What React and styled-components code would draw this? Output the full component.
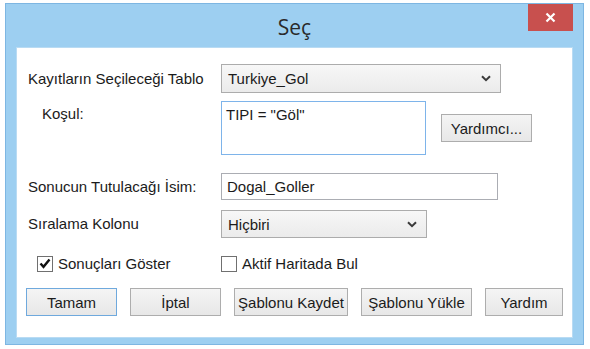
import React from "react";
import styled, { createGlobalStyle } from "styled-components";

const Global = createGlobalStyle`
  html, body { margin: 0; padding: 0; background: #ffffff; }
  body { font-family: "Liberation Sans", Arial, sans-serif; color: #1b1b1b; }
  * { box-sizing: border-box; }
`;

const Window = styled.div`
  margin: 3px 0 0 5px;
  width: 579px;
  height: 342px;
  background: #9dcff1;
  border: 1px solid #7db6e2;
  display: flex;
  flex-direction: column;
`;

const TitleBar = styled.div`
  height: 43px;
  display: grid;
  grid-template-columns: 1fr auto 1fr;
  padding: 0 10px;
`;

const Title = styled.div`
  grid-column: 2;
  font-family: "Open Sans", "Liberation Sans", sans-serif;
  font-size: 21px;
  color: #2a2a2a;
  padding-top: 9px;
  line-height: 28px;
`;

const CloseButton = styled.div`
  grid-column: 3;
  justify-self: end;
  width: 45px;
  height: 27px;
  background: #c8504e;
  display: flex;
  align-items: center;
  justify-content: center;
`;

const Content = styled.div`
  flex: 1;
  margin: 0 10px 6px;
  background: #ffffff;
  border: 1px solid #b9dbf3;
  padding: 16px 0 0 0;
  display: flex;
  flex-direction: column;
`;

const Row = styled.div`
  display: grid;
  grid-template-columns: 204px auto auto;
  justify-content: start;
  align-items: center;
  margin-top: ${(p) => p.$mt || 0}px;
`;

const Label = styled.div`
  font-size: 15px;
  line-height: 18px;
  padding-left: ${(p) => p.$indent || 11}px;
  padding-top: ${(p) => p.$pt || 0}px;
  align-self: ${(p) => (p.$top ? "start" : "center")};
  white-space: nowrap;
`;

const SelectBox = styled.div`
  width: ${(p) => p.$w}px;
  height: ${(p) => p.$h}px;
  border: 1px solid #acacac;
  background: linear-gradient(#f7f7f7, #ebebeb);
  display: flex;
  align-items: center;
  justify-content: space-between;
  padding: 0 9px 0 6px;
  font-size: 15px;
`;

const TextBox = styled.div`
  width: ${(p) => p.$w}px;
  height: ${(p) => p.$h}px;
  border: 1px solid #abadb3;
  background: #ffffff;
  display: flex;
  align-items: center;
  padding: 0 5px;
  font-size: 15px;
`;

const TextArea = styled.div`
  width: 205px;
  height: 54px;
  border: 1px solid #7eb4ea;
  background: #ffffff;
  padding: 4px 4px;
  font-size: 15px;
  line-height: 18px;
`;

const Button = styled.div`
  width: ${(p) => p.$w}px;
  height: 28px;
  border: 1px solid ${(p) => (p.$default ? "#6fa9dd" : "#adadad")};
  background: linear-gradient(#f4f4f4, #e7e7e7);
  display: flex;
  align-items: center;
  justify-content: center;
  font-size: 15px;
  white-space: nowrap;
  margin-left: ${(p) => p.$ml || 0}px;
`;

const CheckRow = styled.div`
  display: grid;
  grid-template-columns: 204px auto;
  justify-content: start;
  align-items: center;
  margin-top: 17px;
`;

const CheckItem = styled.div`
  display: flex;
  align-items: center;
  gap: 5px;
  padding-left: ${(p) => p.$indent || 0}px;
  font-size: 15px;
`;

const Box = styled.span`
  width: 16px;
  height: 16px;
  border: 1px solid #707070;
  background: #ffffff;
  display: flex;
  align-items: center;
  justify-content: center;
`;

const ButtonRow = styled.div`
  display: flex;
  gap: 13px;
  padding-left: 9px;
  margin-top: 16px;
`;

const Chevron = () => (
  <svg width="10" height="7" viewBox="0 0 10 7">
    <path d="M1 1.2 L5 5.2 L9 1.2" fill="none" stroke="#3a3a3a" strokeWidth="2" />
  </svg>
);

const Check = () => (
  <svg width="12" height="11" viewBox="0 0 12 11">
    <path d="M1.5 5.5 L4.5 8.8 L10.5 1.5" fill="none" stroke="#111" strokeWidth="2.4" />
  </svg>
);

export default function App() {
  return (
    <>
      <Global />
      <Window>
        <TitleBar>
          <Title>Seç</Title>
          <CloseButton>
            <svg width="11" height="11" viewBox="0 0 11 11">
              <path d="M1.5 1.5 L9.5 9.5 M9.5 1.5 L1.5 9.5" stroke="#fff" strokeWidth="2.2" />
            </svg>
          </CloseButton>
        </TitleBar>
        <Content>
          <Row>
            <Label>Kayıtların Seçileceği Tablo</Label>
            <SelectBox $w={280} $h={29}>
              <span>Turkiye_Gol</span>
              <Chevron />
            </SelectBox>
          </Row>
          <Row $mt={8}>
            <Label $indent={25} $pt={4} $top>Koşul:</Label>
            <TextArea>TIPI = "Göl"</TextArea>
            <Button $w={91} $ml={15}>Yardımcı...</Button>
          </Row>
          <Row $mt={18}>
            <Label>Sonucun Tutulacağı İsim:</Label>
            <TextBox $w={277} $h={27}>Dogal_Goller</TextBox>
          </Row>
          <Row $mt={10}>
            <Label>Sıralama Kolonu</Label>
            <SelectBox $w={206} $h={28}>
              <span>Hiçbiri</span>
              <Chevron />
            </SelectBox>
          </Row>
          <CheckRow>
            <CheckItem $indent={20}>
              <Box><Check /></Box>
              Sonuçları Göster
            </CheckItem>
            <CheckItem>
              <Box />
              Aktif Haritada Bul
            </CheckItem>
          </CheckRow>
          <ButtonRow>
            <Button $w={91} $default>Tamam</Button>
            <Button $w={91}>İptal</Button>
            <Button $w={114}>Şablonu Kaydet</Button>
            <Button $w={111}>Şablonu Yükle</Button>
            <Button $w={78}>Yardım</Button>
          </ButtonRow>
        </Content>
      </Window>
    </>
  );
}
